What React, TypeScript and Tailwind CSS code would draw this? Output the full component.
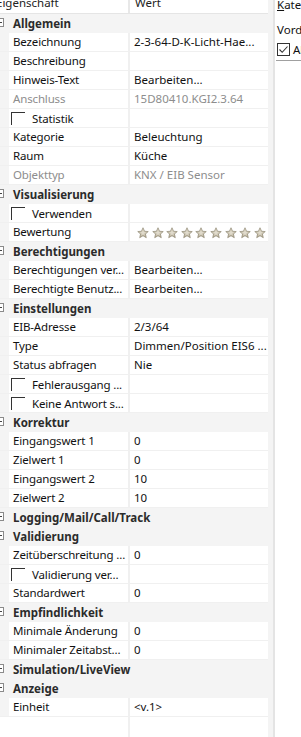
import React from "react";

type Row =
  | { kind: "cat"; name: string }
  | { kind: "prop"; name: string; value?: string; gray?: boolean }
  | { kind: "check"; name: string }
  | { kind: "stars"; name: string };

const rows: Row[] = [
  { kind: "cat", name: "Allgemein" },
  { kind: "prop", name: "Bezeichnung", value: "2-3-64-D-K-Licht-Hae..." },
  { kind: "prop", name: "Beschreibung", value: "" },
  { kind: "prop", name: "Hinweis-Text", value: "Bearbeiten..." },
  { kind: "prop", name: "Anschluss", value: "15D80410.KGI2.3.64", gray: true },
  { kind: "check", name: "Statistik" },
  { kind: "prop", name: "Kategorie", value: "Beleuchtung" },
  { kind: "prop", name: "Raum", value: "Küche" },
  { kind: "prop", name: "Objekttyp", value: "KNX / EIB Sensor", gray: true },
  { kind: "cat", name: "Visualisierung" },
  { kind: "check", name: "Verwenden" },
  { kind: "stars", name: "Bewertung" },
  { kind: "cat", name: "Berechtigungen" },
  { kind: "prop", name: "Berechtigungen ver...", value: "Bearbeiten..." },
  { kind: "prop", name: "Berechtigte Benutz...", value: "Bearbeiten..." },
  { kind: "cat", name: "Einstellungen" },
  { kind: "prop", name: "EIB-Adresse", value: "2/3/64" },
  { kind: "prop", name: "Type", value: "Dimmen/Position EIS6 ..." },
  { kind: "prop", name: "Status abfragen", value: "Nie" },
  { kind: "check", name: "Fehlerausgang ..." },
  { kind: "check", name: "Keine Antwort s..." },
  { kind: "cat", name: "Korrektur" },
  { kind: "prop", name: "Eingangswert 1", value: "0" },
  { kind: "prop", name: "Zielwert 1", value: "0" },
  { kind: "prop", name: "Eingangswert 2", value: "10" },
  { kind: "prop", name: "Zielwert 2", value: "10" },
  { kind: "cat", name: "Logging/Mail/Call/Track" },
  { kind: "cat", name: "Validierung" },
  { kind: "prop", name: "Zeitüberschreitung ...", value: "0" },
  { kind: "check", name: "Validierung ver..." },
  { kind: "prop", name: "Standardwert", value: "0" },
  { kind: "cat", name: "Empfindlichkeit" },
  { kind: "prop", name: "Minimale Änderung", value: "0" },
  { kind: "prop", name: "Minimaler Zeitabst...", value: "0" },
  { kind: "cat", name: "Simulation/LiveView" },
  { kind: "cat", name: "Anzeige" },
  { kind: "prop", name: "Einheit", value: "<v.1>" },
];

const font = { fontFamily: '"Segoe UI", "Noto Sans", "Open Sans", sans-serif' };

function Star() {
  return (
    <svg width="12" height="12" viewBox="0 0 24 24">
      <defs>
        <linearGradient id="sg" x1="0" y1="0" x2="0" y2="1">
          <stop offset="0" stopColor="#e2dccb" />
          <stop offset="1" stopColor="#b3aa92" />
        </linearGradient>
      </defs>
      <path
        d="M12 1.5l3.1 7 7.4.6-5.6 4.9 1.7 7.4L12 17.5l-6.6 3.9 1.7-7.4L1.5 9.1l7.4-.6z"
        fill="url(#sg)"
        stroke="#8f8874"
        strokeWidth="1.4"
        strokeLinejoin="round"
      />
      <path d="M12 6l1.6 4 4.2.3-3.2 2.8 1 4.2L12 15l-3.6 2.3 1-4.2-3.2-2.8 4.2-.3z" fill="#f2efe6" opacity="0.55" />
    </svg>
  );
}

function ExpandIcon() {
  return (
    <div className="absolute left-[-5px] top-[4px] w-[9px] h-[9px] border border-[#8a8a8a] bg-white flex items-center justify-center">
      <div className="w-[5px] h-px bg-[#444]" />
    </div>
  );
}

function CheckCorner() {
  return <div className="w-[14px] h-[13px] border-t border-l border-[#333] mt-[2px] shrink-0" />;
}

function GridRow({ row }: { row: Row }) {
  if (row.kind === "cat") {
    return (
      <div className="relative h-[19px] bg-[#f4f4f4] flex items-center">
        <ExpandIcon />
        <span className="pl-[13px] font-bold text-[11.5px] text-[#2b2b2b] whitespace-nowrap leading-[18px]">{row.name}</span>
      </div>
    );
  }
  const nameColor = row.kind === "prop" && row.gray ? "text-[#8d8d8d]" : "text-[#111]";
  return (
    <div className="flex h-[19px] border-b border-[#f0f0f0] bg-[#f4f4f4]">
      <div className="w-[9px] shrink-0" />
      <div className="w-[119px] shrink-0 bg-white flex items-center overflow-hidden">
        {row.kind === "check" ? (
          <div className="flex items-start h-full pt-[1px] pl-[2px]">
            <CheckCorner />
            <span className="pl-[7px] text-[11.5px] tracking-[-0.15px] text-[#111] whitespace-nowrap leading-[17px]">{row.name}</span>
          </div>
        ) : (
          <span className={`pl-[4px] text-[11.5px] tracking-[-0.15px] whitespace-nowrap leading-[18px] ${nameColor}`}>{row.name}</span>
        )}
      </div>
      <div className="w-[2px] shrink-0 bg-[#f0f0f0]" />
      <div className="w-[138px] shrink-0 bg-white flex items-center overflow-hidden">
        {row.kind === "stars" ? (
          <div className="flex pl-[7px] gap-[2.6px] pt-[1px]">
            {Array.from({ length: 9 }).map((_, i) => (
              <Star key={i} />
            ))}
          </div>
        ) : row.kind === "prop" ? (
          <span
            className={`pl-[4px] text-[11.5px] whitespace-nowrap leading-[18px] ${
              row.gray ? "text-[#8d8d8d]" : "text-[#111]"
            }`}
          >
            {row.value}
          </span>
        ) : null}
      </div>
    </div>
  );
}

export default function App() {
  return (
    <div className="w-[301px] h-[737px] overflow-hidden bg-white flex" style={font}>
      <div className="w-[268px] shrink-0 flex flex-col">
        <div className="h-[14px] shrink-0 flex border-b border-[#e5e5e5] bg-white overflow-hidden">
          <div className="w-[128px] shrink-0 overflow-hidden relative">
            <span className="absolute left-[-4px] top-[-6px] text-[11.5px] text-[#222] whitespace-nowrap leading-[18px]">Eigenschaft</span>
          </div>
          <div className="w-[2px] shrink-0 bg-[#e8e8e8]" />
          <div className="flex-1 relative">
            <span className="absolute left-[5px] top-[-6px] text-[11.5px] text-[#222] whitespace-nowrap leading-[18px]">Wert</span>
          </div>
        </div>
        {rows.map((r, i) => (
          <GridRow key={i} row={r} />
        ))}
        <div className="flex flex-1">
          <div className="w-[9px] shrink-0 bg-white" />
          <div className="w-[119px] shrink-0 bg-white" />
          <div className="w-[2px] shrink-0 bg-[#f0f0f0]" />
          <div className="flex-1 bg-white" />
        </div>
      </div>
      <div className="w-[5px] shrink-0 bg-[#f4f4f4]" />
      <div className="w-[2px] shrink-0 bg-[#e4e4e4]" />
      <div className="flex-1 bg-white flex flex-col overflow-hidden">
        <div className="h-[20px] pl-[2px] relative">
          <span className="absolute left-[2px] top-[-4px] text-[11.5px] text-[#111] whitespace-nowrap leading-[18px]">
            <span className="underline">K</span>ategorie
          </span>
        </div>
        <div className="h-[20px] pl-[2px] text-[11.5px] text-[#111] whitespace-nowrap leading-[18px] pt-[1px]">Vorderseite</div>
        <div className="h-[17px] flex items-center pl-[2px] mt-[1px]">
          <div className="w-[13px] h-[13px] border border-[#333] bg-white flex items-center justify-center shrink-0">
            <svg width="11" height="11" viewBox="0 0 11 11">
              <path d="M1.5 5.5l2.7 2.8L9.5 2.5" fill="none" stroke="#333" strokeWidth="1.1" />
            </svg>
          </div>
          <span className="pl-[3px] text-[11.5px] text-[#111] whitespace-nowrap leading-[18px]">Aktiv</span>
        </div>
        <div className="mt-[2px] h-px bg-[#a0a0a0] ml-[1px]" />
      </div>
    </div>
  );
}
